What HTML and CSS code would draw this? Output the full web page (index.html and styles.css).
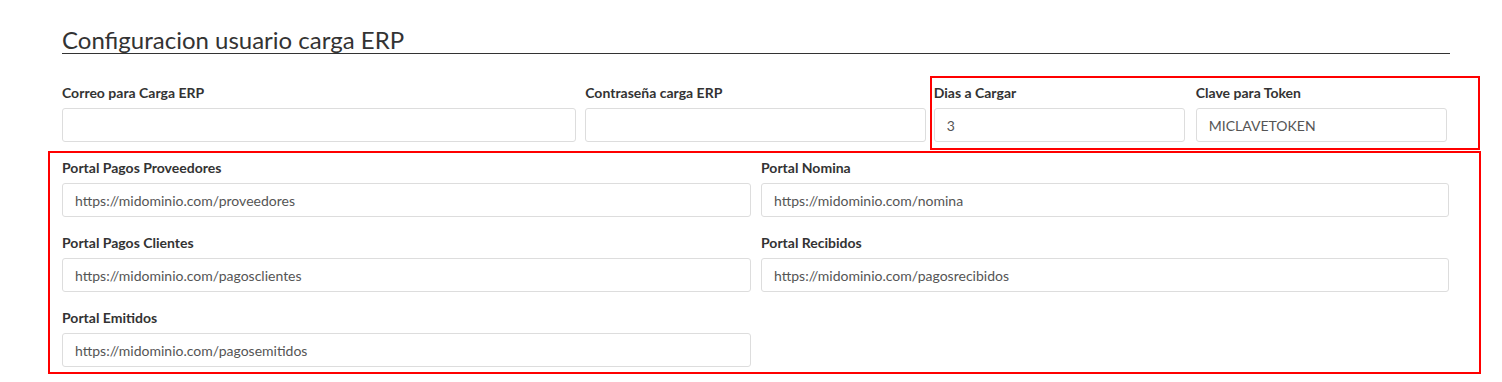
FILE: index.html
```html
<!DOCTYPE html>
<html lang="es">
<head>
  <meta charset="UTF-8">
  <meta name="viewport" content="width=device-width, initial-scale=1.0">
  <title>Configuracion usuario carga ERP</title>
  <link rel="stylesheet" href="styles.css">
</head>
<body>
  <div class="page">
    <h2 class="section-title">Configuracion usuario carga ERP</h2>

    <div class="row-top">
      <div class="field w-correo">
        <label>Correo para Carga ERP</label>
        <input type="text" value="">
      </div>
      <div class="field w-pass">
        <label>Contraseña carga ERP</label>
        <input type="password" value="">
      </div>
      <div class="mark mark-top">
        <div class="field w-small">
          <label>Dias a Cargar</label>
          <input type="text" value="3">
        </div>
        <div class="field w-small">
          <label>Clave para Token</label>
          <input type="text" value="MICLAVETOKEN">
        </div>
      </div>
    </div>

    <div class="mark mark-portals">
      <div class="field">
        <label>Portal Pagos Proveedores</label>
        <input type="text" value="https://midominio.com/proveedores">
      </div>
      <div class="field">
        <label>Portal Nomina</label>
        <input type="text" value="https://midominio.com/nomina">
      </div>
      <div class="field">
        <label>Portal Pagos Clientes</label>
        <input type="text" value="https://midominio.com/pagosclientes">
      </div>
      <div class="field">
        <label>Portal Recibidos</label>
        <input type="text" value="https://midominio.com/pagosrecibidos">
      </div>
      <div class="field">
        <label>Portal Emitidos</label>
        <input type="text" value="https://midominio.com/pagosemitidos">
      </div>
    </div>
  </div>
</body>
</html>
```

FILE: styles.css
```css
body { margin: 0; background: #fff; font-family: Lato, "Open Sans", sans-serif; color: #333; }
.page { padding: 0 0 0 48px; width: 1432px; }
.section-title { margin: 27px 0 0 14px; width: 1388px; font-size: 24px; font-weight: 400; line-height: 26px; color: #333; border-bottom: 1px solid #333; padding-bottom: 0; }
.row-top { display: flex; align-items: flex-start; margin-top: 22px; padding-left: 14px; }
.field label { display: block; font-size: 14px; font-weight: 700; line-height: 18px; color: #333; margin-bottom: 6px; }
.field input { display: block; box-sizing: border-box; width: 100%; height: 34px; padding: 0 12px; border: 1px solid #ddd; border-radius: 3px; font-family: Lato, "Open Sans", sans-serif; font-size: 14px; color: #555; background: #fff; }
.w-correo { width: 515px; margin-top: 8px; margin-right: 9px; }
.w-pass { width: 341px; margin-top: 8px; margin-right: 4px; }
.w-small { width: 251px; }
.mark { border: 2px solid #ff0000; }
.mark-top { display: flex; gap: 11px; padding: 6px 30px 6px 2px; width: 515px; }
.mark-portals { display: grid; grid-template-columns: 689px 688px; column-gap: 10px; row-gap: 17px; padding: 6px 29px 5px 12px; width: 1388px; margin-top: 1px; }
```
